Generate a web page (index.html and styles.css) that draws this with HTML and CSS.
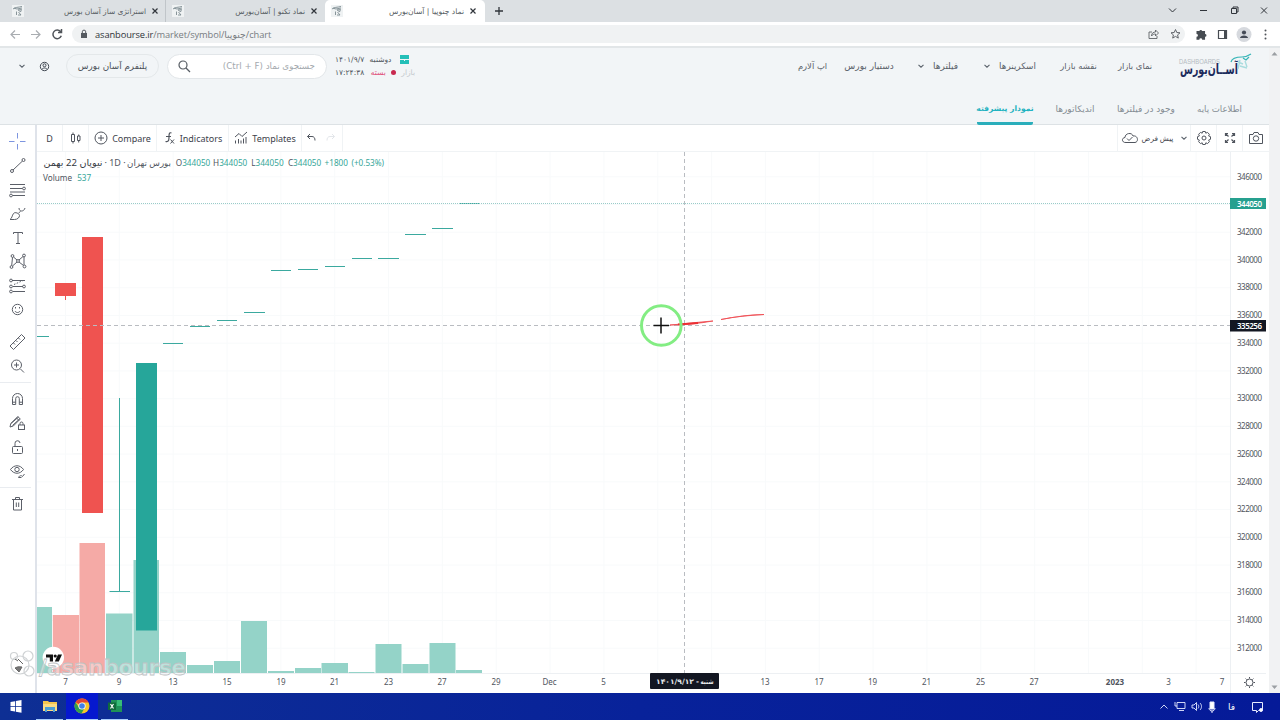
FILE: index.html
```html
<!DOCTYPE html>
<html lang="fa">
<head>
<meta charset="utf-8">
<title>نماد چنوپیا | آسان‌بورس</title>
<link rel="stylesheet" href="styles.css">
</head>
<body>
<svg class="defs" width="0" height="0">
  <symbol id="fav" viewBox="0 0 12 12"><path d="M1 4c2-2 5-1.500 9-2.500M2 3.200l3 .8 5-1M6 5l3.500-.5-1 2.500-2-2zM4.500 6.500v3.500M6.500 7l2.500 3H6" fill="none" stroke="#7c8a90" stroke-width=".9"/></symbol>
  <symbol id="x" viewBox="0 0 8 8"><path d="M1.500 1.500l5 5m0-5l-5 5" stroke="#30353b" stroke-width="1.200"/></symbol>
  <symbol id="chev" viewBox="0 0 8 8"><path d="M1.500 2.800L4 5.200l2.500-2.400" fill="none" stroke="#5c636c" stroke-width="1.100"/></symbol>
</svg>
<div class="tabs">
  <div class="tab"><svg class="fav"><use href="#fav"/></svg><span dir="rtl">استراتژی ساز آسان بورس</span><svg class="x"><use href="#x"/></svg></div>
  <div class="tab second"><svg class="fav"><use href="#fav"/></svg><span dir="rtl">نماد تکنو | آسان‌بورس</span><svg class="x"><use href="#x"/></svg></div>
  <div class="tab active"><svg class="fav"><use href="#fav"/></svg><span dir="rtl">نماد چنوپیا | آسان‌بورس</span><svg class="x"><use href="#x"/></svg></div>
  <svg class="plus" width="10" height="10"><path d="M5 1v8M1 5h8" stroke="#30353b" stroke-width="1.300"/></svg>
  <svg class="win" width="110" height="16" fill="none" stroke="#30353b"><path d="M4 4.500L7.500 8 11 4.500M35 6.500h7M66.500 4.500h5v5h-5zM68 4V3h5v5h-1M96 3.500l6 6m0-6l-6 6"/></svg>
</div>
<div class="bar">
  <svg class="navs" width="72" height="22" fill="none" stroke-width="1.200"><g stroke="#a9adb1"><path d="M20 11.500h-9M15 7.500l-4 4 4 4M31 11.500h9M36 7.500l4 4-4 4"/></g><path d="M60.500 8.500a4.300 4.300 0 1 0 .8 4.300M61.500 6v3.500H58" stroke="#50545a" stroke-width="1.500"/></svg>
  <div class="omni">
    <svg width="8" height="10"><rect x="1" y="4" width="6" height="5" fill="#555a60"/><path d="M2.300 4V2.800a1.700 1.700 0 0 1 3.400 0V4" fill="none" stroke="#555a60"/></svg>
    <div class="url" dir="ltr"><b>asanbourse.ir</b><span>/market/symbol/<bdi>چنوپیا</bdi>/chart</span></div>
    <svg class="share" width="36" height="12" fill="none" stroke="#5f6368"><path d="M4 4H1v6.500h8V8M3.500 8c0-3 2-4 4-4V2l3 3-3 3V6c-2 0-3 .5-4 2z" stroke-width=".9"/><path d="M27.500 1.500l1.300 3 3.200.3-2.400 2.100.7 3.200-2.800-1.700-2.800 1.700.7-3.200L23 4.800l3.200-.3z"/></svg>
  </div>
  <svg class="exts" width="90" height="22"><path d="M10 8h3a1.600 1.600 0 0 1 3 0h3v3a1.500 1.500 0 0 1 0 3v3h-3a1.500 1.500 0 0 0-3 0h-3v-3a1.500 1.500 0 0 0 0-3z" fill="#474c52" transform="translate(2 .5) scale(.95)"/><path d="M33.500 7.500h8v8h-8z" fill="none" stroke="#474c52" stroke-width="1.200"/><path d="M39 7h3v9h-3z" fill="#474c52"/><circle cx="59" cy="11.500" r="7.500" fill="#d6d9de"/><circle cx="59" cy="9.500" r="2.100" fill="#454b57"/><path d="M55 15c0-3.500 8-3.500 8 0z" fill="#454b57"/><g fill="#50545a"><circle cx="80.500" cy="7.500" r="1"/><circle cx="80.500" cy="11.500" r="1"/><circle cx="80.500" cy="15.500" r="1"/></g></svg>
</div>
<div class="page">
<div class="site">
  <header class="head">
    <div class="top">
      <svg class="c1" width="8" height="8"><use href="#chev"/></svg>
      <svg class="c2" width="11" height="11" fill="none" stroke="#444b55"><circle cx="5.500" cy="5.500" r="4.200"/><circle cx="5.500" cy="4.300" r="1.500"/><path d="M2.800 8.500c1-2 4.400-2 5.400 0"/></svg>
      <div class="pill" dir="rtl">پلتفرم آسان بورس</div>
      <div class="search"><svg width="14" height="14" fill="none" stroke="#565c63" stroke-width="1.200"><circle cx="5" cy="6" r="4"/><path d="M8 9l4 4"/></svg><span dir="rtl">جستجوی نماد (Ctrl + F)</span></div>
      <div class="date">
        <div class="l1"><span class="dt">۱۴۰۱/۹/۷</span><span class="dy">دوشنبه</span><svg width="9" height="9"><path d="M0 0h9v4H0zM0 5h4v1h1V5h4v4H0z" fill="#24bfb8"/></svg></div>
        <div class="l2"><span class="dt">۱۷:۲۴:۳۸</span><span class="cl">بسته</span><i></i><span class="mk">بازار</span></div>
      </div>
      <span class="n n1" dir="rtl">اپ آلارم</span>
      <span class="n n2" dir="rtl">دستیار بورس</span>
      <svg class="v1" width="8" height="8"><use href="#chev"/></svg>
      <span class="n n3" dir="rtl">فیلترها</span>
      <svg class="v2" width="8" height="8"><use href="#chev"/></svg>
      <span class="n n4" dir="rtl">اسکرینرها</span>
      <span class="n n5" dir="rtl">نقشه بازار</span>
      <span class="n n6" dir="rtl">نمای بازار</span>
      <svg class="logo" width="78" height="34"><text x="1" y="15" class="dash" textLength="41" lengthAdjust="spacingAndGlyphs">DASHBOARDS</text><text x="31" y="25" text-anchor="middle" class="asan" textLength="58" lengthAdjust="spacingAndGlyphs">آســان‌بورس</text><g fill="none" stroke="#35b5b7"><path d="M53 13c1-4 7-5 11-5 4 0 6-1 9-3M65 9l3 2 3-3" stroke-width="1.200"/><path d="M60 13l5 2M62 17l7 2M62 11l-2 9M67 12l2 6" stroke="#a9dcde" stroke-width="1.400"/></g></svg>
    </div>
    <nav class="sub">
      <span class="on" dir="rtl">نمودار پیشرفته</span><span class="s2" dir="rtl">اندیکاتورها</span><span class="s3" dir="rtl">وجود در فیلترها</span><span class="s4" dir="rtl">اطلاعات پایه</span>
    </nav>
  </header>
  <div class="work">
    <aside class="tools">
      <svg viewBox="0 0 24 24" class="blue"><path d="M12.500 4v5.500M12.500 15v5.500M4 12.500h5.500M15 12.500h5.500"/></svg>
      <svg viewBox="0 0 24 24"><circle cx="7" cy="18" r="1.500"/><circle cx="18.500" cy="7" r="1.500"/><path d="M8 17l9.500-9"/></svg>
      <svg viewBox="0 0 24 24"><path d="M5 7.500h15M5 11.500h12.500M5 15h15M7.500 18.500H20"/><circle cx="19" cy="11.500" r="1.400"/><circle cx="6" cy="18.500" r="1.400"/></svg>
      <svg viewBox="0 0 24 24"><path d="M5 18.500c2-1 2-4 3.500-6s6 0 6 2-2 4-5 4zM14 7c0 4 5 4 6 0M13.500 12l2-1.500"/></svg>
      <svg viewBox="0 0 24 24"><path d="M8.500 9V7.500h9V9M13 7.500v11M11 18.500h4"/></svg>
      <svg viewBox="0 0 24 24"><circle cx="7.500" cy="7" r="1.400"/><circle cx="19" cy="6.500" r="1.400"/><circle cx="13" cy="12" r="1.400"/><circle cx="6.500" cy="18" r="1.400"/><circle cx="19.500" cy="17.500" r="1.400"/><path d="M7.500 8.500l-.8 8M8.500 8l3.500 3M14 11l4-3.500M19 8v8M7.500 17l4.500-4M14 13l4.500 3.500"/></svg>
      <svg viewBox="0 0 24 24"><path d="M7 7.500h13M8 13.500h10M8 18.500h12"/><path d="M9 11.500l9-4" stroke-dasharray="1.500"/><circle cx="6" cy="7.500" r="1.400"/><circle cx="6" cy="13.500" r="1.400"/><circle cx="19" cy="13.500" r="1.400"/><circle cx="6" cy="18.500" r="1.400"/></svg>
      <svg viewBox="0 0 24 24"><circle cx="12.500" cy="12.500" r="5.200"/><path d="M10 14c1 2 4 2 5 0M10.500 10v1.500M14.500 10v1.500"/></svg>
      <svg viewBox="0 0 24 24" class="gap"><path d="M5 16L16.500 4.500l3.500 3.500L8.500 19.500zM8.500 13l1.500 1.500M11 10.500l1.500 1.500M13.500 8l1.500 1.500"/></svg>
      <svg viewBox="0 0 24 24"><circle cx="11.500" cy="11" r="5"/><path d="M15.500 15l3.500 3.500M11.500 8.500v5M9 11h5"/></svg>
      <hr>
      <svg viewBox="0 0 24 24"><path d="M7.500 17.500v-6a5 5 0 0 1 10 0v6h-3.200v-6a1.800 1.800 0 0 0-3.600 0v6zM7.500 15.200h3.200M14.300 15.200h3.200"/></svg>
      <svg viewBox="0 0 24 24"><path d="M5 16l.8-3.500 7-7 2.500 2.500-7 7zM11.500 7l2.500 2.500M6 12.500L13.500 6M7.500 14.500l7-6.500"/><rect x="13.500" y="14" width="6" height="4.500"/><path d="M15 14v-1.500a1.500 1.500 0 0 1 3 0V14"/></svg>
      <svg viewBox="0 0 24 24"><rect x="7.500" y="11.500" width="10" height="7" rx="1"/><path d="M10 11V8.500a2.500 2.500 0 0 1 5-.5M12.500 14v2"/></svg>
      <svg viewBox="0 0 24 24"><path d="M5.500 10.500c3.500-5 9.500-5 13 0-3.500 5-9.500 5-13 0z"/><circle cx="12" cy="10.500" r="2.200"/><path d="M13.500 18.500c1-2.500 3.500-2 4-1l2-2.500M13.500 18.500h3"/></svg>
      <hr>
      <svg viewBox="0 0 24 24"><path d="M7 7.500h11M8.500 7.500v10.500h8V7.500M10.500 7.500v-2h4v2M11.300 10.500V15M13.700 10.500V15"/></svg>
    </aside>
    <main class="main">
      <div class="tb">
        <div class="g gd">D</div>
        <div class="g gc"><svg width="12" height="14"><path d="M1.500 3.500h3v7h-3zM3 1.500v2M3 10.500v2M7.500 5H10v4.500H7.500zM8.700 3.500V5M8.700 9.500v2"/></svg></div>
        <div class="g gp"><svg width="14" height="14"><circle cx="7" cy="7" r="6"/><path d="M7 4v6M4 7h6"/></svg><span>Compare</span></div>
        <div class="g gi"><svg width="13" height="14"><path d="M8.500 2C6 1 6 3.500 6 6s0 5.500-3.500 4.500M3 5.500h5" stroke-width="1.200"/><path d="M7.500 8.500l3.500 4m0-4l-3.500 4"/></svg><span>Indicators</span></div>
        <div class="g gt"><svg width="14" height="14"><path d="M1 6l4-3.500 3 3L13 1M1.500 12.500v-3M4.500 12.500V8M7 12.500v-3M9.500 12.500v-5M12 12.500V6"/></svg><span>Templates</span></div>
        <div class="g gu"><svg width="34" height="12"><path d="M5 2L2.500 4.500 5 7M2.500 4.500H7c2 0 3 1.500 3 4"/><path d="M27 2l2.500 2.500L27 7M29.500 4.500H25c-2 0-3 1.500-3 4" stroke="#e3e6ea"/></svg></div>
        <div class="g gs"><svg width="18" height="14"><path d="M5 11.500C1 12 0 7 4 6.500 4 2 11 1 12 5c5-1 6 6 2 6.500zM6 7.500l2 2 3.500-3.500"/></svg><span dir="rtl">پیش فرض</span><svg width="8" height="8"><use href="#chev"/></svg></div>
        <div class="g gg"><svg width="16" height="16"><path d="M6.700 1.500h2.600l.5 1.700 1.700-.8 1.900 1.900-.8 1.600 1.900.8v2.600l-1.900.8.8 1.600-1.900 1.900-1.700-.8-.5 1.700H6.700l-.5-1.700-1.700.8-1.900-1.900.8-1.600-1.900-.8V6.700l1.900-.8-.8-1.600 1.900-1.900 1.700.8z"/><circle cx="8" cy="8" r="2"/></svg></div>
        <div class="g gf"><svg width="12" height="12"><path d="M1.500 4V1.500H4M1.500 1.500L4.500 4.500M8 1.500h2.500V4M10.500 1.500l-3 3M1.500 8v2.500H4M1.500 10.500l3-3M10.500 8v2.500H8M10.500 10.500l-3-3" stroke-width="1.200"/></svg></div>
        <div class="g gm"><svg width="16" height="14"><path d="M1.500 3.500H5l1-2h4l1 2h3.500v9h-13z"/><circle cx="8" cy="7.500" r="2.700"/></svg></div>
      </div>
      <svg class="chart" width="1232" height="541" viewBox="37 152 1232 541">
        <defs>
          <pattern id="v" x="65" y="0" width="53.840" height="20" patternUnits="userSpaceOnUse"><path d="M.5 0v20" stroke="#f8fafb"/></pattern>
          <pattern id="h" x="0" y="176.300" width="20" height="27.730" patternUnits="userSpaceOnUse"><path d="M0 .5h20" stroke="#f8fafb"/></pattern>
        </defs>
        <path fill="url(#v)" d="M37 152h1193v521H37z"/><path fill="url(#h)" d="M37 152h1193v521H37z"/>
        <g fill="#94d3c8"><path d="M37 607h15v66H37zM106 613.500h26.500V673H106zM133.500 560H159v113h-25.500zM160 652h26v21h-26zM187 665h26v8h-26zM214 661h26v12h-26zM241 621h26v52h-26zM268 671h26v2h-26zM295 668h26v5h-26zM321.500 663H348v10h-26.500zM348.500 672h26v1h-26zM375.500 644h26v29h-26zM402.500 664h26v9h-26zM429.500 643h26v30h-26zM456 670h26v3h-26z"/></g>
        <path d="M52.800 615H79v58H52.800zM79.500 543H105v130H79.500z" fill="#f5aaa6"/>
        <path d="M55 283h21v13H55zM65 296h1v4h-1zM82 237h21v276H82z" fill="#ef5350"/>
        <path d="M136 363h21v267.500h-21z" fill="#26a69a"/>
        <path d="M119.500 398v194M109.500 591.500H130M37 336.500h12M163 343.500h20M190 326.500h20M217 320.500h20M244 312.500h21M271 270.500h20M298 269.500h20M325 266.500h20M352 258.500h20M378 258.500h21M405 234.500h21M432 228.500h21M460 203.500h20" stroke="#3ba99f"/>
        <path d="M37 203.500h1193" stroke="#9accc9" stroke-dasharray="1 1"/>
        <path d="M37 325.500h1193M684.500 152v521" stroke="#b9bcc1" stroke-dasharray="4 3"/>
        <path d="M670 325c14 0 29-1.500 43-4-15 1-29 3-43 4zM721 319.500c14-2.500 28-5 43-5-15 1-29 2-43 5z" fill="#ef4a50" stroke="#ef4a50" stroke-width=".8"/>
        <path d="M678 324.500l20-1.500" stroke="#eb2f33" stroke-width="1.800"/>
        <circle cx="661.300" cy="325.500" r="19.800" fill="none" stroke="#83ed83" stroke-width="3"/>
        <path d="M661 317.500v16M653.500 325.500h15.500" stroke="#111" stroke-width="1.500"/>
        <path d="M1230.500 152v541M37 673.500h1229" stroke="#edf0f3" fill="none"/>
        <g class="px">
          <text x="1237" y="179.500" textLength="25">346000</text><text x="1237" y="235" textLength="25">342000</text><text x="1237" y="262.700" textLength="25">340000</text><text x="1237" y="290.400" textLength="25">338000</text><text x="1237" y="318.200" textLength="25">336000</text><text x="1237" y="345.900" textLength="25">334000</text><text x="1237" y="373.600" textLength="25">332000</text><text x="1237" y="401.300" textLength="25">330000</text><text x="1237" y="429" textLength="25">328000</text><text x="1237" y="456.800" textLength="25">326000</text><text x="1237" y="484.500" textLength="25">324000</text><text x="1237" y="512.200" textLength="25">322000</text><text x="1237" y="540" textLength="25">320000</text><text x="1237" y="567.700" textLength="25">318000</text><text x="1237" y="595.400" textLength="25">316000</text><text x="1237" y="623.100" textLength="25">314000</text><text x="1237" y="650.800" textLength="25">312000</text>
        </g>
        <path d="M1230 198h36v11h-36z" fill="#26a08f"/><path d="M1230 320h36v11.500h-36z" fill="#131722"/>
        <g class="px w"><text x="1237" y="206.500" textLength="25">344050</text><text x="1237" y="328.700" textLength="25">335256</text></g>
        <g class="tx">
          <text x="65.500" y="684.500">7</text><text x="119" y="684.500">9</text><text x="173" y="684.500">13</text><text x="227" y="684.500">15</text><text x="281" y="684.500">19</text><text x="334.500" y="684.500">21</text><text x="388.500" y="684.500">23</text><text x="442" y="684.500">27</text><text x="496" y="684.500">29</text><text x="549.500" y="684.500">Dec</text><text x="603.500" y="684.500">5</text><text x="765" y="684.500">13</text><text x="819" y="684.500">17</text><text x="872.500" y="684.500">19</text><text x="926.500" y="684.500">21</text><text x="980.500" y="684.500">25</text><text x="1034" y="684.500">27</text><text x="1115" y="684.500" class="yr">2023</text><text x="1168.500" y="684.500">3</text><text x="1222" y="684.500">7</text>
        </g>
        <rect x="650" y="673" width="69" height="16" rx="1" fill="#131722"/>
        <text x="656" y="684" class="dl" textLength="38" lengthAdjust="spacingAndGlyphs">۱۴۰۱/۹/۱۲</text><text x="697.500" y="684" class="dl" text-anchor="middle">-</text><text x="707" y="683.500" class="dl" text-anchor="middle" textLength="13" lengthAdjust="spacingAndGlyphs">شنبه</text>
        <g fill="none" stroke="#50545d"><circle cx="1249.500" cy="682.500" r="3.500"/><path d="M1249.500 677v1.500M1249.500 686.500v1.500M1244 682.500h1.500M1253.500 682.500h1.500M1245.600 678.600l1 1M1252.400 685.400l1 1M1245.600 686.400l1-1M1252.400 679.600l1-1"/></g>
      </svg>
      <div class="legend">
        <div class="r1" dir="ltr"><span class="a" dir="rtl">نیوپان 22 بهمن</span><span class="b">· 1D ·</span><span class="c" dir="rtl">بورس تهران</span><span class="o">O<em>344050</em></span><span class="o">H<em>344050</em></span><span class="o">L<em>344050</em></span><span class="o">C<em>344050</em></span><em class="d1">+1800</em><em class="d2">(+0.53%)</em></div>
        <div class="r2">Volume<em>537</em></div>
      </div>
    </main>
  </div>
  <svg class="mark" width="190" height="40" viewBox="0 645 190 40"><circle cx="53.300" cy="657.500" r="10.700" fill="#fff"/><path d="M46 654.500h7v7h-3.200v-4H46zM58 654.500h4l-3.200 7h-4z" fill="#111"/><circle cx="55.200" cy="656" r="1.600" fill="#111"/><g fill="none" stroke="#cfd2d4" stroke-width="1.200"><circle cx="14" cy="656" r="3.500"/><circle cx="28" cy="656" r="5"/><circle cx="29" cy="671" r="5"/><circle cx="20" cy="665" r="9"/></g><path d="M15 659l3 2M18 659l5 5M15 668c3-2 6-1 7-1l-3 5z" stroke="#666" fill="#777"/><text x="39" y="675" class="wm" textLength="147" lengthAdjust="spacingAndGlyphs">/asanbourse</text></svg>
</div>
<div class="scroll"><svg width="11" height="645"><path d="M2.500 7.500l3-3.500 3 3.500zM2.500 637.500h6l-3 3.500z" fill="#9b9fa3"/></svg></div>
</div>
<footer class="task">
  <svg width="35" height="27"><path d="M10.500 9l4.500-.8V13h-4.500zM15.800 8.100L21.500 7v6h-5.700zM10.500 13.800H15v4.800l-4.500-.8zM15.800 13.800h5.700v6l-5.700-1z" fill="#fff"/></svg>
  <div class="app"><svg width="16" height="14"><path d="M1 2h5l1 1h8v9H1z" fill="#f3c54f"/><path d="M1 5h14v7H1z" fill="#fadb82"/><path d="M3 8h10v5h-2v-2H5v2H3z" fill="#4b9fd5"/></svg></div>
  <div class="app cur"><svg width="16" height="16"><circle cx="8" cy="8" r="7.500" fill="#f5c62c"/><path d="M8 8L1.500 4.200A7.500 7.500 0 0 1 14.600 4.500H8z" fill="#e04435"/><path d="M1.500 4.200A7.500 7.500 0 0 0 7.500 15.500L10.500 10 8 8 5 9.500z" fill="#2f9e50"/><circle cx="8" cy="8" r="3.600" fill="#fff"/><circle cx="8" cy="8" r="2.800" fill="#3f80ea"/></svg></div>
  <div class="app"><svg width="16" height="14"><path d="M4 1h11v12H4z" fill="#1f9257"/><path d="M10 1h5v6h-5z" fill="#37bd78"/><path d="M1 3.500h8v7.500H1z" fill="#0f6b3b"/><path d="M3.500 5l3 4.500m0-4.500l-3 4.500" stroke="#fff" stroke-width="1.200"/></svg></div>
  <svg class="tray" width="120" height="27" fill="none" stroke="#e7ebff"><path d="M1.500 15.500L5 12l3.500 3.500M18 9.500h8v6h-8zM20 17.500h5M16 9v4h2M33 12h2l2.500-2.500v8L35 15h-2zM39 11.500c1 1 1 3 0 4M41 10c2 2 2 5 0 7" stroke-width=".9"/><path d="M51 9h4v7h-4z" fill="#fff"/><path d="M50 15c0 4 6 4 6 0M53 18v2"/><text x="69" y="16.500">فا</text><path d="M93.500 9.500h10v8h-4l-2 2v-2h-4z"/><circle cx="102" cy="17" r="1.500" fill="#fff"/></svg>
</footer>
</body>
</html>
```
FILE: styles.css
```css
* { box-sizing: border-box; }
body { margin: 0; width: 1280px; height: 720px; overflow: hidden; display: flex; flex-direction: column; background: #fff; font-family: "DejaVu Sans", "Noto Sans", sans-serif; color: #50555d; font-size: 8px; }
svg { display: block; flex: none; }
svg.defs { position: absolute; }
span, .pill { white-space: nowrap; }

.tabs { height: 22px; background: #dce0e3; display: flex; align-items: center; flex: none; }
.tab { height: 22px; width: 166px; display: flex; align-items: center; padding-left: 12px; border-right: 1px solid #c0c5c9; }
.tab.second { width: 159px; padding-left: 6px; border: 0; }
.tab.active { width: 160px; background: #fff; border: 0; border-radius: 5px 5px 0 0; padding-left: 6px; }
.tab span { width: 97px; margin-left: 25px; font-size: 7.400px; color: #555b61; }
.tab.second span, .tab.active span { width: 92px; margin-left: 29px; font-size: 7.600px; }
.fav { width: 12px; height: 12px; background: #eff2f3; }
.x { width: 8px; height: 8px; margin-left: 5px; }
.plus { margin-left: 9px; }
.win { margin-left: auto; margin-right: 5px; margin-top: 2px; }

.bar { height: 26px; background: #fff; display: flex; align-items: center; flex: none; border-bottom: 2px solid #e2e6e8; }
.omni { width: 1113px; height: 18px; border-radius: 9px; background: #f0f2f3; display: flex; align-items: center; padding-left: 8px; }
.url { font: 9.300px "Open Sans", "DejaVu Sans", sans-serif; margin-left: 7px; display: flex; width: 168px; color: #777c81; white-space: nowrap; letter-spacing: -.1px; }
.url b { font-weight: 400; color: #2f3439; }
.share { margin-left: auto; margin-right: 1px; }

.page { height: 645px; display: flex; flex: none; }
.site { width: 1269px; display: flex; flex-direction: column; background: #fff; position: relative; }
.scroll { width: 11px; background: #f1f2f3; }

.head { height: 77px; background: #f2f5f7; border-bottom: 1px solid #dde2e5; flex: none; }
.top { height: 36px; display: flex; align-items: center; }
.c1 { margin-left: 18px; }
.c2 { margin-left: 13px; }
.pill { margin-left: 16px; width: 93px; height: 24px; border: 1px solid #e4e8ea; border-radius: 12px; display: flex; align-items: center; justify-content: center; font-size: 8.800px; color: #4c525a; }
.search { margin-left: 8px; width: 160px; height: 25px; border: 1px solid #e2e6e9; border-radius: 13px; background: #fff; display: flex; align-items: center; justify-content: space-between; padding: 0 11px 0 10px; color: #a4a9ae; font-size: 8.700px; }
.date { margin-left: 8px; width: 80px; font-size: 7.500px; }
.date > div { display: flex; align-items: center; height: 13px; }
.dt { width: 33px; }
.dy { width: 25px; text-align: center; }
.l1 svg { margin-left: 7px; }
.cl { color: #e04c78; width: 17px; margin-left: 3px; text-align: center; }
.l2 i { width: 5px; height: 5px; border-radius: 3px; background: #c8294f; margin-left: 5px; }
.mk { color: #c3c8cc; margin-left: 5px; }
.n { display: flex; justify-content: center; font-size: 8.400px; color: #5a6169; }
.n1 { margin-left: 382px; width: 31px; }
.n2 { margin-left: 16px; width: 50px; font-size: 9px; }
.v1 { margin-left: 23px; }
.n3 { margin-left: 7px; width: 27px; font-size: 9px; }
.v2 { margin-left: 24px; }
.n4 { margin-left: 8px; width: 37px; font-size: 8.800px; }
.n5 { margin-left: 24px; width: 37px; }
.n6 { margin-left: 21px; width: 34px; }
.logo { margin-left: 26px; }
.dash { font: 7px "Liberation Sans", sans-serif; fill: #b4bbc1; }
.asan { font: bold 14px "DejaVu Sans", sans-serif; fill: #1c2b5c; }
.sub { height: 41px; display: flex; justify-content: flex-end; gap: 22px; padding-right: 27px; }
.sub span { height: 41px; padding-top: 20px; font-size: 8.600px; color: #858d94; display: flex; justify-content: center; }
.sub span.on { width: 56px; font-size: 7.600px; color: #1eb2c0; font-weight: 700; border-bottom: 3px solid #2aaebb; border-radius: 2px; }
.sub .s2 { width: 40px; font-size: 9px; }
.sub .s3 { width: 58px; font-size: 9px; }
.sub .s4 { width: 45px; }

.work { display: flex; height: 568px; }
.tools { width: 37px; border-right: 2px solid #dfe3ea; padding: 4px 0 0 5px; }
.tools svg { width: 24px; height: 24px; fill: none; stroke: #5b5f68; stroke-width: 1; }
.tools .blue { stroke: #7d95df; }
.tools .gap { margin-top: 9px; }
.tools hr { border: 0; height: 1px; background: #e9ecf0; margin: 4px 4px 4px -5px; }
.main { width: 1232px; display: flex; flex-direction: column; position: relative; }
.tb { height: 27px; display: flex; align-items: center; border-bottom: 1px solid #f0f3f5; flex: none; font: 9px "Noto Sans", "DejaVu Sans", sans-serif; color: #3d424b; }
.g { height: 26px; display: flex; align-items: center; justify-content: center; border-right: 1px solid #f0f3f5; }
.g svg { fill: none; stroke: #50555e; stroke-width: 1; }
.g span { display: flex; justify-content: center; margin-left: 4px; }
.gd { width: 26px; }
.gc { width: 26px; }
.gp { width: 68px; }
.gi { width: 72px; }
.gt { width: 73px; }
.gu { width: 41px; }
.gs { margin-left: 774px; width: 74px; border-left: 1px solid #f0f3f5; }
.gs span { width: 36px; font-size: 7.300px; margin: 0 4px 0 1px; }
.gg, .gf { width: 26px; }
.gm { width: 25px; border: 0; }
.px { font: 8px "Noto Sans", sans-serif; fill: #50555e; }
.px.w { fill: #fff; font-weight: 600; }
.tx { font: 8px "Noto Sans", sans-serif; fill: #50555e; text-anchor: middle; }
.yr { font-weight: 700; }
.dl { font: bold 7.200px "DejaVu Sans", sans-serif; fill: #e6e8ea; }

.legend { position: absolute; left: 6px; top: 30px; font: 8.200px "Noto Sans", "DejaVu Sans", sans-serif; color: #50555e; }
.legend em { font-style: normal; color: #36a699; }
.r1, .r2 { height: 15px; display: flex; align-items: center; }
.r1 > * { display: flex; justify-content: center; }
.r1 .a { width: 60px; font-size: 9.600px; color: #333941; }
.r1 .b { width: 24px; font-size: 9px; white-space: pre; }
.r1 .c { width: 44px; font-size: 8.700px; margin-right: 5px; }
.r1 .o { width: 34px; margin-right: 3.200px; }
.r1 .d1 { width: 23px; }
.r1 .d2 { width: 34px; margin-left: 3px; }
.r2 em { margin-left: 5px; }
.mark { position: absolute; left: 0; top: 597px; }
.wm { font: bold 22px "DejaVu Sans", sans-serif; fill: #fff; fill-opacity: .4; stroke: #c0c3c5; stroke-width: .8; }

.task { height: 27px; background: linear-gradient(90deg, #0e2f94, #08229a 50%, #051a98); display: flex; flex: none; }
.app { width: 27px; margin-right: 3px; margin-left: 1px; display: flex; align-items: center; justify-content: center; border-bottom: 1px solid #a9cdfb; }
.cur { width: 32px; background: #0618cf; margin: 0 2px 0 0; }
.tray { margin-left: auto; margin-right: 1px; }
.tray text { font: 9px "DejaVu Sans", sans-serif; fill: #fff; stroke: none; }
```
